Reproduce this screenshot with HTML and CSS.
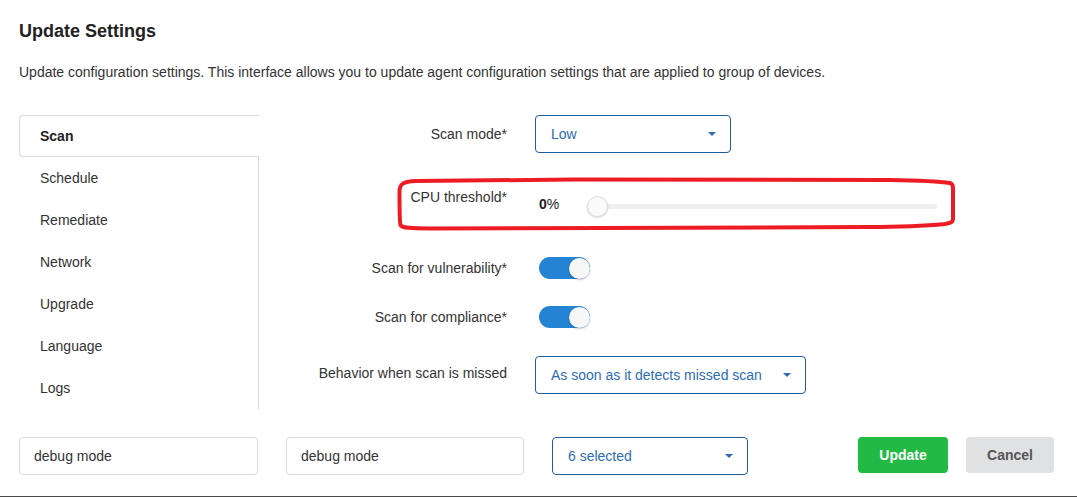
FILE: index.html
```html
<!DOCTYPE html>
<html lang="en">
<head>
<meta charset="utf-8">
<title>Update Settings</title>
<link rel="stylesheet" href="styles.css">
</head>
<body>
<div class="page">
  <h1 class="title">Update Settings</h1>
  <p class="desc">Update configuration settings. This interface allows you to update agent configuration settings that are applied to group of devices.</p>

  <div class="main">
    <ul class="nav">
      <li class="nav-item active">Scan</li>
      <li class="nav-item">Schedule</li>
      <li class="nav-item">Remediate</li>
      <li class="nav-item">Network</li>
      <li class="nav-item">Upgrade</li>
      <li class="nav-item">Language</li>
      <li class="nav-item">Logs</li>
    </ul>

    <div class="form">
      <div class="row row-mode">
        <label class="label">Scan mode*</label>
        <div class="dropdown dd-mode"><span class="dd-text">Low</span><span class="caret"></span></div>
      </div>

      <div class="row row-cpu">
        <label class="label">CPU threshold*</label>
        <div class="slider-wrap">
          <span class="slider-value"><b>0</b>%</span>
          <div class="slider">
            <div class="track"></div>
            <div class="thumb"></div>
          </div>
        </div>
      </div>

      <div class="row row-toggle row-vuln">
        <label class="label">Scan for vulnerability*</label>
        <div class="toggle"><span class="knob"></span></div>
      </div>

      <div class="row row-toggle row-comp">
        <label class="label">Scan for compliance*</label>
        <div class="toggle"><span class="knob"></span></div>
      </div>

      <div class="row row-missed">
        <label class="label label-top">Behavior when scan is missed</label>
        <div class="dropdown dd-missed"><span class="dd-text">As soon as it detects missed scan</span><span class="caret"></span></div>
      </div>
    </div>
  </div>

  <div class="bottom">
    <div class="input in-1">debug mode</div>
    <div class="input in-2">debug mode</div>
    <div class="dropdown dd-sel"><span class="dd-text">6 selected</span><span class="caret"></span></div>
    <div class="buttons">
      <button class="btn btn-update">Update</button>
      <button class="btn btn-cancel">Cancel</button>
    </div>
  </div>

  <svg class="annotation" width="1077" height="497" viewBox="0 0 1077 497" aria-hidden="true">
    <path d="M399.5 192 C399.5 184, 403 181.5, 416 181 L575 179.5 L890 180 C920 180.5, 940 181.5, 950 183 C953 184, 953 186, 953 190 L953 219 C953 222, 951 223, 945 224 C925 226, 900 227, 868 227 L600 228 L430 228.5 C410 228.5, 402 228, 400.5 225 C399.5 222, 399.5 212, 399.5 192 Z"
      fill="none" stroke="#ed1c24" stroke-width="4" stroke-linejoin="round"/>
  </svg>
</div>
</body>
</html>
```

FILE: styles.css
```css
* { box-sizing: border-box; }

body {
  margin: 0;
  font-family: "Liberation Sans", Arial, sans-serif;
  font-size: 14px;
  color: #333;
  background: #fff;
}

.page {
  position: relative;
  height: 497px;
  padding: 0 23px 0 19px;
  border-bottom: 1px solid #4a4a4a;
  overflow: hidden;
}

.title {
  margin: 0;
  padding-top: 21px;
  font-size: 18px;
  line-height: 20px;
  font-weight: bold;
  color: #222;
}

.desc {
  margin: 23px 0 35px;
  line-height: 16px;
  color: #333;
}

.main {
  display: flex;
  align-items: flex-start;
}

.nav {
  list-style: none;
  margin: 0;
  padding: 0;
  width: 240px;
  flex: none;
}

.nav-item {
  height: 42px;
  line-height: 42px;
  padding-left: 21px;
  border-right: 1px solid #d9d9d9;
  color: #333;
}

.nav-item.active {
  font-weight: bold;
  color: #222;
  padding-left: 20px;
  line-height: 40px;
  border: 1px solid #d9d9d9;
  border-right: none;
  border-radius: 4px 0 0 4px;
}

.form {
  flex: 1;
}

.row {
  display: flex;
  align-items: center;
}

.label {
  width: 276px;
  flex: none;
  padding-right: 28px;
  text-align: right;
  line-height: 16px;
  color: #333;
}

.row-mode { height: 38px; }

.row-cpu {
  margin-top: 36px;
  align-items: flex-start;
}

.row-toggle { height: 22px; }
.row-vuln { margin-top: 40px; }
.row-comp { margin-top: 27px; }

.row-missed {
  margin-top: 28px;
  align-items: flex-start;
}

.label-top { padding-top: 9px; }

.dropdown {
  display: flex;
  align-items: center;
  justify-content: space-between;
  height: 38px;
  padding: 0 14px 0 15px;
  border: 1px solid #1f5c9e;
  border-radius: 4px;
  color: #2c6db3;
}

.dd-mode { width: 196px; }
.dd-missed { width: 271px; }

.caret {
  width: 0;
  height: 0;
  border-left: 4px solid transparent;
  border-right: 4px solid transparent;
  border-top: 4px solid #2c6db3;
}

.slider-wrap {
  display: flex;
  align-items: flex-start;
  margin-top: 7px;
  padding-left: 4px;
}

.slider-value {
  width: 48px;
  line-height: 16px;
  color: #222;
}

.slider {
  position: relative;
  width: 360px;
  height: 21px;
}

.track {
  margin: 8px 10px 0;
  height: 5px;
  border-radius: 3px;
  background: #efefef;
}

.thumb {
  position: absolute;
  left: 0;
  top: 0;
  width: 21px;
  height: 21px;
  border-radius: 50%;
  background: #fafafa;
  border: 1px solid #dcdcdc;
  box-shadow: 0 1px 2px rgba(0, 0, 0, 0.15);
}

.toggle {
  display: flex;
  justify-content: flex-end;
  align-items: center;
  width: 51px;
  height: 22px;
  margin-left: 4px;
  border-radius: 11px;
  background: #2483d2;
}

.knob {
  width: 21px;
  height: 21px;
  border-radius: 50%;
  background: #f7f7f7;
  box-shadow: 0 1px 2px rgba(0, 0, 0, 0.25);
}

.bottom {
  display: flex;
  align-items: flex-start;
  gap: 28px;
  margin-top: 28px;
}

.input {
  height: 38px;
  line-height: 36px;
  padding-left: 14px;
  border: 1px solid #dcdcdc;
  border-radius: 4px;
  color: #333;
}

.in-1 { width: 239px; }
.in-2 { width: 238px; }

.dd-sel { width: 196px; }

.buttons {
  display: flex;
  gap: 18px;
  margin-left: auto;
}

.btn {
  height: 36px;
  border: none;
  border-radius: 4px;
  font-family: "Liberation Sans", Arial, sans-serif;
  font-size: 14px;
  font-weight: bold;
  padding: 0;
}

.btn-update {
  width: 90px;
  background: #21ba45;
  color: #fff;
}

.btn-cancel {
  width: 88px;
  background: #e0e1e2;
  color: #555;
}

.annotation {
  position: absolute;
  left: 0;
  top: 0;
  pointer-events: none;
}
```
